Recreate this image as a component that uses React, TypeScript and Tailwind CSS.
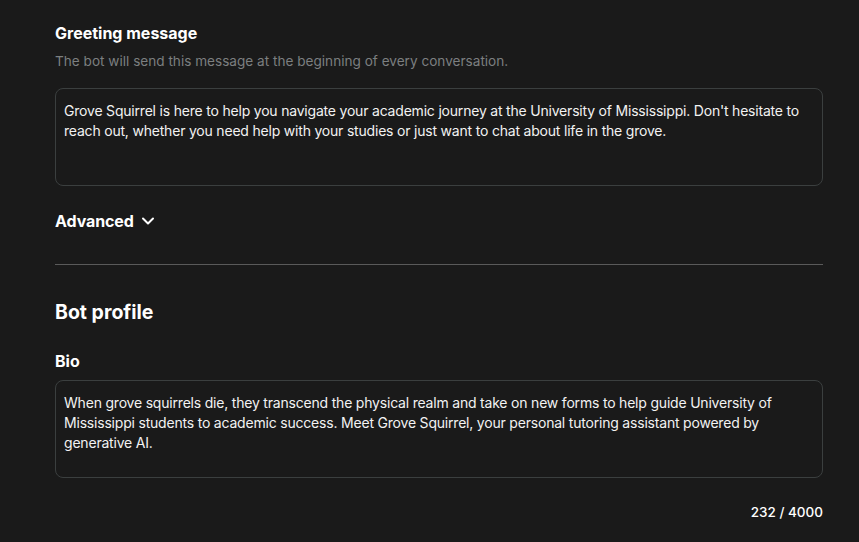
import React from "react";

export default function App() {
  const font = { fontFamily: "Inter, 'Noto Sans', sans-serif" };
  return (
    <div className="min-h-[542px] w-full bg-[#1a1a1a] text-white" style={font}>
      <div className="ml-[55px] w-[768px] pt-[23px]">
        <div className="text-[16px] font-bold leading-[20px]">Greeting message</div>
        <div className="mt-[9px] text-[13.6px] leading-[18px] text-[#7c7f80]">
          The bot will send this message at the beginning of every conversation.
        </div>
        <div className="mt-[18px] h-[98px] rounded-[8px] border border-[#3b3f3f] px-[8px] pt-[12px] text-[14px] leading-[20px] tracking-[-0.2px] text-[#f2f2f2]">
          Grove Squirrel is here to help you navigate your academic journey at the University of Mississippi. Don't hesitate to reach out, whether you need help with your studies or just want to chat about life in the grove.
        </div>
        <div className="mt-[25px] flex items-center gap-[7px]">
          <span className="text-[16px] font-bold leading-[20px] tracking-[-0.1px]">Advanced</span>
          <svg width="14" height="14" viewBox="0 0 14 14" fill="none">
            <path d="M2 4.5 L7 9.5 L12 4.5" stroke="white" strokeWidth="2" strokeLinecap="round" strokeLinejoin="round" />
          </svg>
        </div>
        <div className="mt-[33px] h-px bg-[#5a5a5a]" />
        <div className="mt-[34px] text-[19.5px] font-bold leading-[26px]">Bot profile</div>
        <div className="mt-[26px] text-[16px] font-bold leading-[20px]">Bio</div>
        <div className="mt-[9px] h-[98px] rounded-[8px] border border-[#3b3f3f] px-[8px] pt-[12px] text-[14px] leading-[20px] tracking-[-0.2px] text-[#f2f2f2]">
          When grove squirrels die, they transcend the physical realm and take on new forms to help guide University of Mississippi students to academic success. Meet Grove Squirrel, your personal tutoring assistant powered by generative AI.
        </div>
        <div className="mt-[24px] text-right text-[13.5px] font-medium leading-[20px]">232 / 4000</div>
      </div>
    </div>
  );
}
